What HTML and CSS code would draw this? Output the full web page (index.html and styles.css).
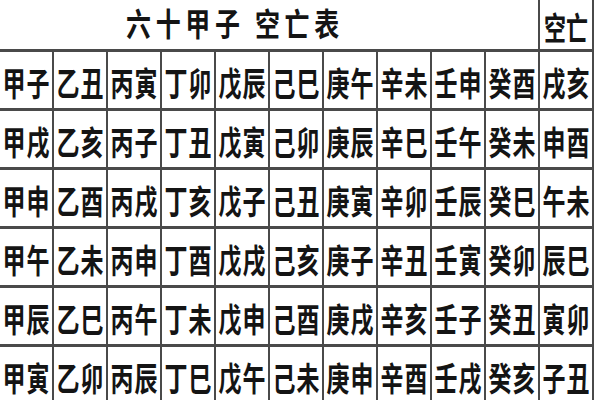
FILE: index.html
```html
<!DOCTYPE html>
<html lang="zh">
<head>
<meta charset="utf-8">
<title>六十甲子 空亡表</title>
<link rel="stylesheet" href="styles.css">
</head>
<body>
<div class="table">
  <div class="title"><span class="wide">六十甲子 空亡表</span></div>
  <div class="cell head"><span class="tall">空亡</span></div>

  <div class="cell"><span class="tall">甲子</span></div>
  <div class="cell"><span class="tall">乙丑</span></div>
  <div class="cell"><span class="tall">丙寅</span></div>
  <div class="cell"><span class="tall">丁卯</span></div>
  <div class="cell"><span class="tall">戊辰</span></div>
  <div class="cell"><span class="tall">己巳</span></div>
  <div class="cell"><span class="tall">庚午</span></div>
  <div class="cell"><span class="tall">辛未</span></div>
  <div class="cell"><span class="tall">壬申</span></div>
  <div class="cell"><span class="tall">癸酉</span></div>
  <div class="cell"><span class="tall">戌亥</span></div>

  <div class="cell"><span class="tall">甲戌</span></div>
  <div class="cell"><span class="tall">乙亥</span></div>
  <div class="cell"><span class="tall">丙子</span></div>
  <div class="cell"><span class="tall">丁丑</span></div>
  <div class="cell"><span class="tall">戊寅</span></div>
  <div class="cell"><span class="tall">己卯</span></div>
  <div class="cell"><span class="tall">庚辰</span></div>
  <div class="cell"><span class="tall">辛巳</span></div>
  <div class="cell"><span class="tall">壬午</span></div>
  <div class="cell"><span class="tall">癸未</span></div>
  <div class="cell"><span class="tall">申酉</span></div>

  <div class="cell"><span class="tall">甲申</span></div>
  <div class="cell"><span class="tall">乙酉</span></div>
  <div class="cell"><span class="tall">丙戌</span></div>
  <div class="cell"><span class="tall">丁亥</span></div>
  <div class="cell"><span class="tall">戊子</span></div>
  <div class="cell"><span class="tall">己丑</span></div>
  <div class="cell"><span class="tall">庚寅</span></div>
  <div class="cell"><span class="tall">辛卯</span></div>
  <div class="cell"><span class="tall">壬辰</span></div>
  <div class="cell"><span class="tall">癸巳</span></div>
  <div class="cell"><span class="tall">午未</span></div>

  <div class="cell"><span class="tall">甲午</span></div>
  <div class="cell"><span class="tall">乙未</span></div>
  <div class="cell"><span class="tall">丙申</span></div>
  <div class="cell"><span class="tall">丁酉</span></div>
  <div class="cell"><span class="tall">戊戌</span></div>
  <div class="cell"><span class="tall">己亥</span></div>
  <div class="cell"><span class="tall">庚子</span></div>
  <div class="cell"><span class="tall">辛丑</span></div>
  <div class="cell"><span class="tall">壬寅</span></div>
  <div class="cell"><span class="tall">癸卯</span></div>
  <div class="cell"><span class="tall">辰巳</span></div>

  <div class="cell"><span class="tall">甲辰</span></div>
  <div class="cell"><span class="tall">乙巳</span></div>
  <div class="cell"><span class="tall">丙午</span></div>
  <div class="cell"><span class="tall">丁未</span></div>
  <div class="cell"><span class="tall">戊申</span></div>
  <div class="cell"><span class="tall">己酉</span></div>
  <div class="cell"><span class="tall">庚戌</span></div>
  <div class="cell"><span class="tall">辛亥</span></div>
  <div class="cell"><span class="tall">壬子</span></div>
  <div class="cell"><span class="tall">癸丑</span></div>
  <div class="cell"><span class="tall">寅卯</span></div>

  <div class="cell"><span class="tall">甲寅</span></div>
  <div class="cell"><span class="tall">乙卯</span></div>
  <div class="cell"><span class="tall">丙辰</span></div>
  <div class="cell"><span class="tall">丁巳</span></div>
  <div class="cell"><span class="tall">戊午</span></div>
  <div class="cell"><span class="tall">己未</span></div>
  <div class="cell"><span class="tall">庚申</span></div>
  <div class="cell"><span class="tall">辛酉</span></div>
  <div class="cell"><span class="tall">壬戌</span></div>
  <div class="cell"><span class="tall">癸亥</span></div>
  <div class="cell"><span class="tall">子丑</span></div>
</div>
</body>
</html>
```

FILE: styles.css
```css
html, body {
  margin: 0;
  padding: 0;
  background: #fff;
  overflow: hidden;
}

body {
  font-family: "Noto Sans CJK SC", "Noto Sans CJK TC", sans-serif;
  color: #141414;
}

.table {
  display: grid;
  width: max-content;
  grid-template-columns: repeat(11, 52px);
  grid-template-rows: 49px repeat(6, 56px);
  column-gap: 2px;
  row-gap: 3px;
  padding-right: 2px;
  background: #4a4a4a;
}

.title {
  grid-column: 1 / span 10;
  background: #fff;
  display: flex;
  align-items: center;
  padding-left: 126px;
  padding-bottom: 6px;
  font-size: 32px;
  line-height: 1;
  font-weight: 700;
  letter-spacing: 6px;
  white-space: pre;
}

.wide {
  display: inline-block;
  transform: scaleX(0.78);
  transform-origin: left center;
}

.cell {
  background: #fff;
  display: flex;
  align-items: center;
  justify-content: center;
  font-size: 23px;
  font-weight: 700;
  letter-spacing: 1px;
  padding-top: 5px;
  padding-left: 1px;
  box-sizing: border-box;
}

.cell.head {
  font-size: 22px;
  letter-spacing: 0;
  padding-top: 0;
  padding-left: 0;
}

.tall {
  display: inline-block;
  transform: scaleY(1.45);
  line-height: 1;
  white-space: nowrap;
}
```
